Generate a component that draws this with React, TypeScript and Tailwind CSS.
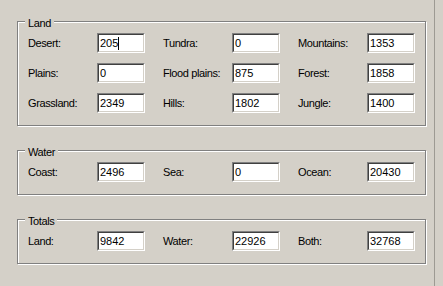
import React from "react";

type Field = { label: string; value: string; cursor?: boolean };

const groups: { title: string; rows: Field[][] }[] = [
  {
    title: "Land",
    rows: [
      [
        { label: "Desert:", value: "205", cursor: true },
        { label: "Tundra:", value: "0" },
        { label: "Mountains:", value: "1353" },
      ],
      [
        { label: "Plains:", value: "0" },
        { label: "Flood plains:", value: "875" },
        { label: "Forest:", value: "1858" },
      ],
      [
        { label: "Grassland:", value: "2349" },
        { label: "Hills:", value: "1802" },
        { label: "Jungle:", value: "1400" },
      ],
    ],
  },
  {
    title: "Water",
    rows: [
      [
        { label: "Coast:", value: "2496" },
        { label: "Sea:", value: "0" },
        { label: "Ocean:", value: "20430" },
      ],
    ],
  },
  {
    title: "Totals",
    rows: [
      [
        { label: "Land:", value: "9842" },
        { label: "Water:", value: "22926" },
        { label: "Both:", value: "32768" },
      ],
    ],
  },
];

function TextBox({ value, cursor }: { value: string; cursor?: boolean }) {
  return (
    <div className="w-[48px] h-[20px] border border-t-[#808080] border-l-[#808080] border-b-white border-r-white">
      <div className="w-full h-full bg-white border border-t-[#404040] border-l-[#404040] border-b-[#d4d0c8] border-r-[#d4d0c8] flex items-center pl-[1px] text-[11px] leading-[13px] text-black">
        <span>{value}</span>
        {cursor && <span className="w-px h-[13px] bg-black" />}
      </div>
    </div>
  );
}

function Group({ title, rows }: { title: string; rows: Field[][] }) {
  return (
    <div className="relative w-[409px] border border-[#808080] shadow-[inset_1px_1px_0_#ffffff,1px_1px_0_#ffffff] pl-[10px] pt-[11px] pb-[12px]">
      <div className="absolute top-[-5px] left-[7px] px-[3px] bg-[#d4d0c8] text-[11px] leading-[13px] tracking-[-0.4px] text-black">
        {title}
      </div>
      <div className="grid grid-cols-[117px_117px_117px] gap-x-[18px] gap-y-[10px]">
        {rows.flat().map((f) => (
          <div key={f.label} className="flex items-center">
            <div className="w-[69px] text-[11px] leading-[13px] tracking-[-0.4px] text-black whitespace-nowrap">
              {f.label}
            </div>
            <TextBox value={f.value} cursor={f.cursor} />
          </div>
        ))}
      </div>
    </div>
  );
}

export default function App() {
  return (
    <div
      className="w-[443px] h-[286px] bg-[#d4d0c8] flex overflow-hidden"
      style={{ fontFamily: '"Liberation Sans", Arial, sans-serif' }}
    >
      <div className="w-[434px] h-full pl-[17px] pt-[21px] flex flex-col gap-[24px]">
        {groups.map((g) => (
          <Group key={g.title} title={g.title} rows={g.rows} />
        ))}
      </div>
      <div className="w-px h-full bg-[#9d9a93]" />
      <div className="flex-1 h-full bg-[#d4d0c8]" />
    </div>
  );
}
